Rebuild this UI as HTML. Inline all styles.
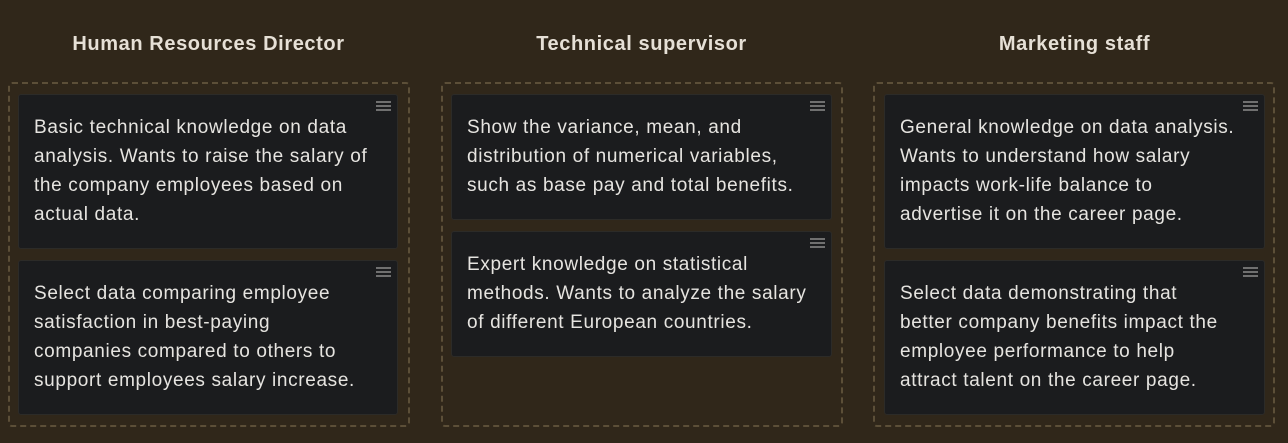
<!DOCTYPE html>
<html><head><style>
body{margin:0;background:#30271a;width:1288px;height:443px;overflow:hidden;font-family:"Liberation Sans",sans-serif;}
.col{position:absolute;top:0;}
.h{position:absolute;top:33px;left:0;right:0;text-align:center;color:#e6e0d6;font-weight:bold;font-size:20px;letter-spacing:0.6px;}
.box{position:absolute;top:82px;height:345px;border:2px dashed #5c4f38;border-radius:4px;box-sizing:border-box;}
.card{position:absolute;background:#1b1c1e;border:1px solid #2c2b28;border-radius:3px;box-sizing:border-box;color:#e6e4e0;font-size:19px;letter-spacing:0.65px;line-height:29px;padding:18px 15px 0 15px;white-space:nowrap;}
.ic{position:absolute;right:6px;top:6px;width:15px;}
.ic i{display:block;height:2px;background:#707070;margin-bottom:2px;}
</style></head><body>
<div class="col" style="left:8px;width:401px"><div class="h">Human Resources Director</div></div>
<div class="col" style="left:441px;width:401px"><div class="h">Technical supervisor</div></div>
<div class="col" style="left:874px;width:401px"><div class="h">Marketing staff</div></div>
<div class="box" style="left:8px;width:402px"></div>
<div class="box" style="left:441px;width:402px"></div>
<div class="box" style="left:873px;width:402px"></div>

<div class="card" style="left:18px;top:94px;width:380px;height:155px"><div class="ic"><i></i><i></i><i></i></div>Basic technical knowledge on data<br>analysis. Wants to raise the salary of<br>the company employees based on<br>actual data.</div>
<div class="card" style="left:18px;top:260px;width:380px;height:155px"><div class="ic"><i></i><i></i><i></i></div>Select data comparing employee<br>satisfaction in best-paying<br>companies compared to others to<br>support employees salary increase.</div>

<div class="card" style="left:451px;top:94px;width:381px;height:126px"><div class="ic"><i></i><i></i><i></i></div>Show the variance, mean, and<br>distribution of numerical variables,<br>such as base pay and total benefits.</div>
<div class="card" style="left:451px;top:231px;width:381px;height:126px"><div class="ic"><i></i><i></i><i></i></div>Expert knowledge on statistical<br>methods. Wants to analyze the salary<br>of different European countries.</div>

<div class="card" style="left:884px;top:94px;width:381px;height:155px"><div class="ic"><i></i><i></i><i></i></div>General knowledge on data analysis.<br>Wants to understand how salary<br>impacts work-life balance to<br>advertise it on the career page.</div>
<div class="card" style="left:884px;top:260px;width:381px;height:155px"><div class="ic"><i></i><i></i><i></i></div>Select data demonstrating that<br>better company benefits impact the<br>employee performance to help<br>attract talent on the career page.</div>
</body></html>
